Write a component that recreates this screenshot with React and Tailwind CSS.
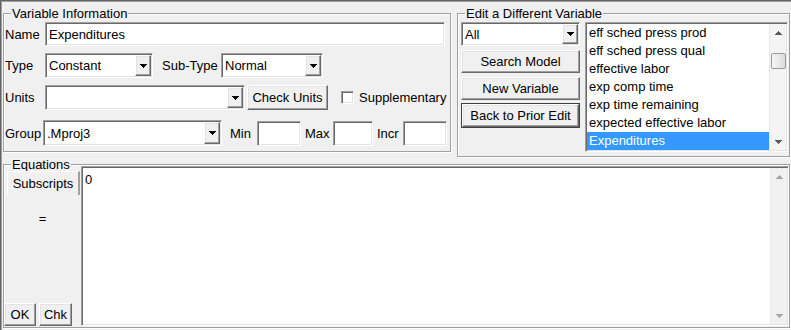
import React from "react";

const sunken =
  "border border-t-[#a0a0a0] border-l-[#a0a0a0] border-r-white border-b-white shadow-[inset_1px_1px_0_#696969,inset_-1px_-1px_0_#e3e3e3]";
const raised =
  "border border-t-white border-l-white border-r-[#696969] border-b-[#696969] shadow-[inset_-1px_-1px_0_#a0a0a0,inset_1px_1px_0_#e3e3e3] bg-[#f0f0f0]";

function Down({ color = "#000" }) {
  return (
    <svg width="7" height="4" viewBox="0 0 7 4" className="block" shapeRendering="crispEdges">
      <path fill={color} d="M0 0h7v1H0zM1 1h5v1H1zM2 2h3v1H2zM3 3h1v1H3z" />
    </svg>
  );
}

function Up({ color = "#000" }) {
  return (
    <svg width="7" height="4" viewBox="0 0 7 4" className="block" shapeRendering="crispEdges">
      <path fill={color} d="M3 0h1v1H3zM2 1h3v1H2zM1 2h5v1H1zM0 3h7v1H0z" />
    </svg>
  );
}

function Group({ title, className = "", legendClass = "", children }) {
  return (
    <div
      className={`border border-[#a0a0a0] shadow-[inset_1px_1px_0_#fff,1px_1px_0_#fff] ${className}`}
    >
      <div className={`-mt-[8px] ml-[7px] w-fit px-[1px] bg-[#f0f0f0] leading-[15px] ${legendClass}`}>
        {title}
      </div>
      {children}
    </div>
  );
}

function Combo({ className = "", text = "" }) {
  return (
    <div className={`${sunken} bg-white flex items-stretch p-[1px] ${className}`}>
      <div className="flex-1 flex items-center pl-[2px] whitespace-nowrap overflow-hidden">{text}</div>
      <div className={`${raised} w-[16px] flex items-center justify-center`}>
        <Down />
      </div>
    </div>
  );
}

function Input({ className = "", text = "" }) {
  return (
    <div className={`${sunken} bg-white flex items-center pl-[3px] ${className}`}>{text}</div>
  );
}

function Button({ className = "", children }) {
  return (
    <div className={`${raised} flex items-center justify-center whitespace-nowrap ${className}`}>
      {children}
    </div>
  );
}

const items = [
  "eff sched press prod",
  "eff sched press qual",
  "effective labor",
  "exp comp time",
  "exp time remaining",
  "expected effective labor",
  "Expenditures",
];

export default function App() {
  return (
    <div className="w-[791px] h-[330px] overflow-hidden border-t border-l border-[#646464] bg-[#f0f0f0] font-['Liberation_Sans',Arial,sans-serif] text-[13px] leading-[15px] text-black">
      <div className="h-full border-t border-l border-[#a0a0a0]">
        <div className="flex items-start pt-[11px] pl-[1px]">
          <Group title="Variable Information" className="w-[448px] h-[139px]">
            <div className="pl-[1px]">
              <div className="mt-[1px] h-[24px] flex items-center">
                <div className="w-[40px]">Name</div>
                <Input className="w-[400px] h-full" text="Expenditures" />
              </div>
              <div className="mt-[7px] h-[25px] flex items-center">
                <div className="w-[40px]">Type</div>
                <Combo className="w-[108px] h-full" text="Constant" />
                <div className="ml-[9px] w-[59px]">Sub-Type</div>
                <Combo className="w-[102px] h-full" text="Normal" />
              </div>
              <div className="mt-[7px] h-[25px] flex items-center">
                <div className="w-[40px]">Units</div>
                <Combo className="w-[200px] h-full" text="" />
                <Button className="ml-[2px] w-[81px] h-full">Check Units</Button>
                <div className={`${sunken} bg-white ml-[13px] w-[13px] h-[13px]`} />
                <div className="ml-[5px]">Supplementary</div>
              </div>
              <div className="mt-[10px] h-[26px] flex items-center">
                <div className="w-[38px]">Group</div>
                <Combo className="w-[179px] h-full" text=".Mproj3" />
                <div className="ml-[8px] w-[27px]">Min</div>
                <Input className="w-[44px] h-[25px]" />
                <div className="ml-[4px] w-[28px]">Max</div>
                <Input className="w-[40px] h-[25px]" />
                <div className="ml-[4px] w-[26px]">Incr</div>
                <Input className="w-[44px] h-[25px]" />
              </div>
            </div>
          </Group>

          <Group title="Edit a Different Variable" className="ml-[6px] w-[333px] h-[144px]">
            <div className="mt-[1px] flex items-start">
              <div className="ml-[3px] w-[119px] flex flex-col">
                <Combo className="w-full h-[24px]" text="All" />
                <Button className="mt-[4px] h-[23px]">Search Model</Button>
                <Button className="mt-[4px] h-[23px]">New Variable</Button>
                <div className="mt-[3px] h-[25px] border border-[#404040]">
                  <Button className="h-full">Back to Prior Edit</Button>
                </div>
              </div>
              <div className={`${sunken} bg-white ml-[5px] w-[203px] h-[130px] p-[1px] flex`}>
                <div className="flex-1 flex flex-col">
                  {items.map((t, i) => (
                    <div
                      key={t}
                      className={`h-[18px] leading-[18px] pl-[2px] whitespace-nowrap ${
                        i === items.length - 1 ? "bg-[#3399ff] text-white" : ""
                      }`}
                    >
                      {t}
                    </div>
                  ))}
                </div>
                <div className="w-[17px] bg-[#f4f4f4] border-l border-[#e8e8e8] flex flex-col items-center">
                  <div className="h-[17px] flex items-center justify-center">
                    <Up color="#5a5a5a" />
                  </div>
                  <div className="mt-[12px] w-[15px] h-[16px] rounded-[2px] border border-[#9a9a9a] bg-linear-to-r from-[#f6f6f6] to-[#dcdcdc]" />
                  <div className="mt-auto h-[17px] flex items-center justify-center">
                    <Down color="#5a5a5a" />
                  </div>
                </div>
              </div>
            </div>
          </Group>
        </div>

        <Group
          title="Equations"
          className="mt-[7px] ml-[1px] w-[787px] h-[164px]"
          legendClass="-mb-[6px]"
        >
          <div className="flex h-[160px]">
            <div className="w-[77px] flex flex-col">
              <div className="ml-[3px] mt-[5px] w-[73px] h-[24px] border-t border-l border-r-2 border-t-white border-l-white border-r-[#a0a0a0] flex items-center justify-center">
                Subscripts
              </div>
              <div className="mt-[16px] text-center">=</div>
              <div className="mt-auto flex">
                <Button className="w-[32px] h-[23px]">OK</Button>
                <Button className="ml-[3px] w-[33px] h-[23px]">Chk</Button>
              </div>
            </div>
            <div className={`${sunken} bg-white flex-1 p-[1px] flex`}>
              <div className="flex-1 pl-[2px] pt-[4px]">0</div>
              <div className="w-[17px] bg-[#f0f0f0] border-l border-[#e8e8e8] flex flex-col items-center">
                <div className="h-[17px] flex items-center justify-center">
                  <Up color="#a8a8a8" />
                </div>
                <div className="mt-auto h-[17px] flex items-center justify-center">
                  <Down color="#a8a8a8" />
                </div>
              </div>
            </div>
          </div>
        </Group>
      </div>
    </div>
  );
}
